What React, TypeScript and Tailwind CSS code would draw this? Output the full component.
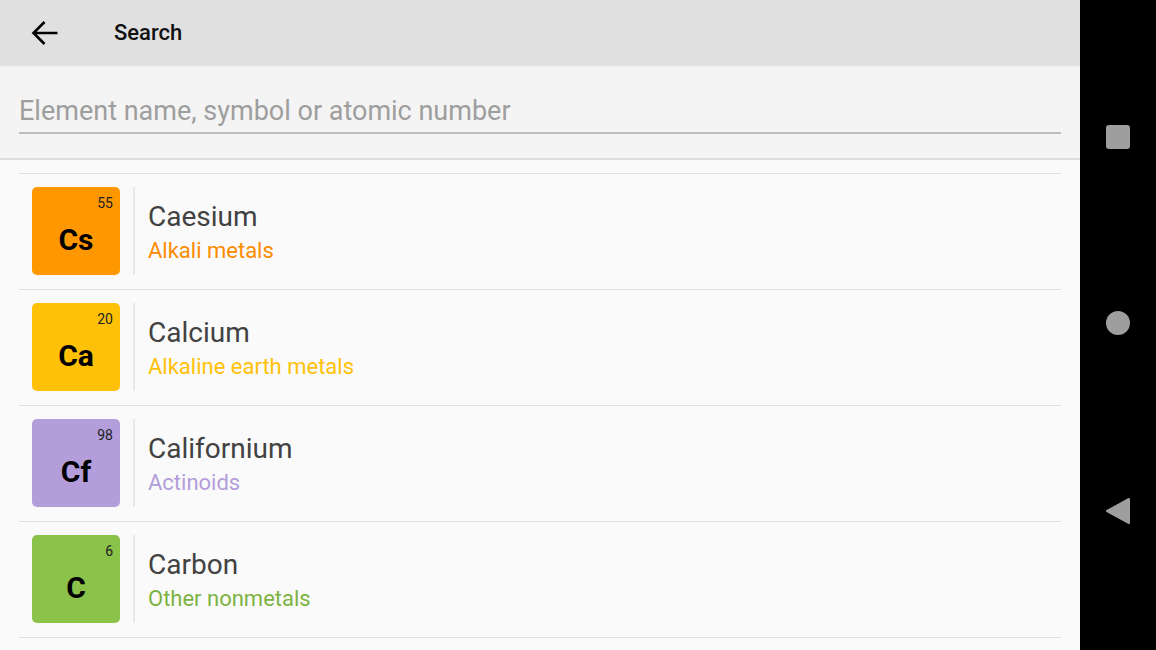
import React from 'react';

type Element = {
    number: number;
    symbol: string;
    name: string;
    category: string;
    tile: string;
    text: string;
};

const elements: Element[] = [
    { number: 55, symbol: 'Cs', name: 'Caesium', category: 'Alkali metals', tile: 'bg-[#ff9800]', text: 'text-[#fb8c00]' },
    { number: 20, symbol: 'Ca', name: 'Calcium', category: 'Alkaline earth metals', tile: 'bg-[#ffc107]', text: 'text-[#ffc107]' },
    { number: 98, symbol: 'Cf', name: 'Californium', category: 'Actinoids', tile: 'bg-[#b39ddb]', text: 'text-[#b39ddb]' },
    { number: 6, symbol: 'C', name: 'Carbon', category: 'Other nonmetals', tile: 'bg-[#8bc34a]', text: 'text-[#7cb342]' },
    { number: 58, symbol: 'Ce', name: 'Cerium', category: 'Lanthanoids', tile: 'bg-[#f7b8b0]', text: 'text-[#ef9a9a]' },
];

const ElementRow = ({ el }: { el: Element }) => (
    <div className="border-t border-[#e0e0e0]">
        <div className="flex items-stretch pl-[13px] pt-[13px] pb-[14px]">
            <div className={`relative w-[88px] h-[88px] shrink-0 rounded-[5px] ${el.tile}`}>
                <span className="absolute right-[7px] top-[9px] text-[14px] leading-none text-[#212121]">
                    {el.number}
                </span>
                <span className="absolute inset-x-0 top-[38px] text-center text-[30px] leading-none font-bold text-black">
                    {el.symbol}
                </span>
            </div>
            <div className="w-[2px] bg-[#e8e8e8] ml-[13px]" />
            <div className="flex flex-col pl-[13px] pt-[14px]">
                <span className="text-[28px] leading-[32px] text-[#424242]">{el.name}</span>
                <span className={`mt-[4px] text-[22px] leading-[28px] ${el.text}`}>{el.category}</span>
            </div>
        </div>
    </div>
);

export default function App() {
    return (
        <div className="flex w-[1156px] h-[650px] overflow-hidden font-['Roboto',sans-serif]">
            <div className="flex flex-col w-[1080px] h-full bg-[#fafafa]">
                <header className="flex items-center h-[65px] shrink-0 bg-[#e0e0e0] shadow-[0_1px_2px_rgba(0,0,0,0.08)] z-10">
                    <svg className="ml-[31px]" width="28" height="26" viewBox="0 0 28 26">
                        <path d="M2.5 13 H26.5 M13.5 2 L2.5 13 L13.5 24" fill="none" stroke="#000" strokeWidth="2.6" />
                    </svg>
                    <span className="ml-[55px] text-[22px] font-medium text-[#111]">Search</span>
                </header>
                <div className="h-[95px] shrink-0 bg-[#f4f4f4] border-b-2 border-[#dcdcdc] px-[19px] pt-[30px]">
                    <div className="border-b-2 border-[#bdbdbd] pb-[5px]">
                        <span className="text-[27px] leading-[32px] text-[#9e9e9e]">Element name, symbol or atomic number</span>
                    </div>
                </div>
                <div className="flex-1 overflow-hidden pt-[13px] px-[19px]">
                    {elements.map((el) => (
                        <ElementRow key={el.symbol} el={el} />
                    ))}
                </div>
            </div>
            <nav className="flex flex-col items-center justify-between w-[76px] h-full bg-black py-[125px] pb-[125px]">
                <div className="w-[24px] h-[24px] rounded-[3px] bg-[#9e9e9e]" />
                <div className="w-[24px] h-[24px] rounded-full bg-[#9e9e9e]" />
                <svg width="26" height="28" viewBox="0 0 26 28">
                    <path d="M24 2 L24 26 L2 14 Z" fill="#9e9e9e" stroke="#9e9e9e" strokeWidth="2" strokeLinejoin="round" />
                </svg>
            </nav>
        </div>
    );
}
